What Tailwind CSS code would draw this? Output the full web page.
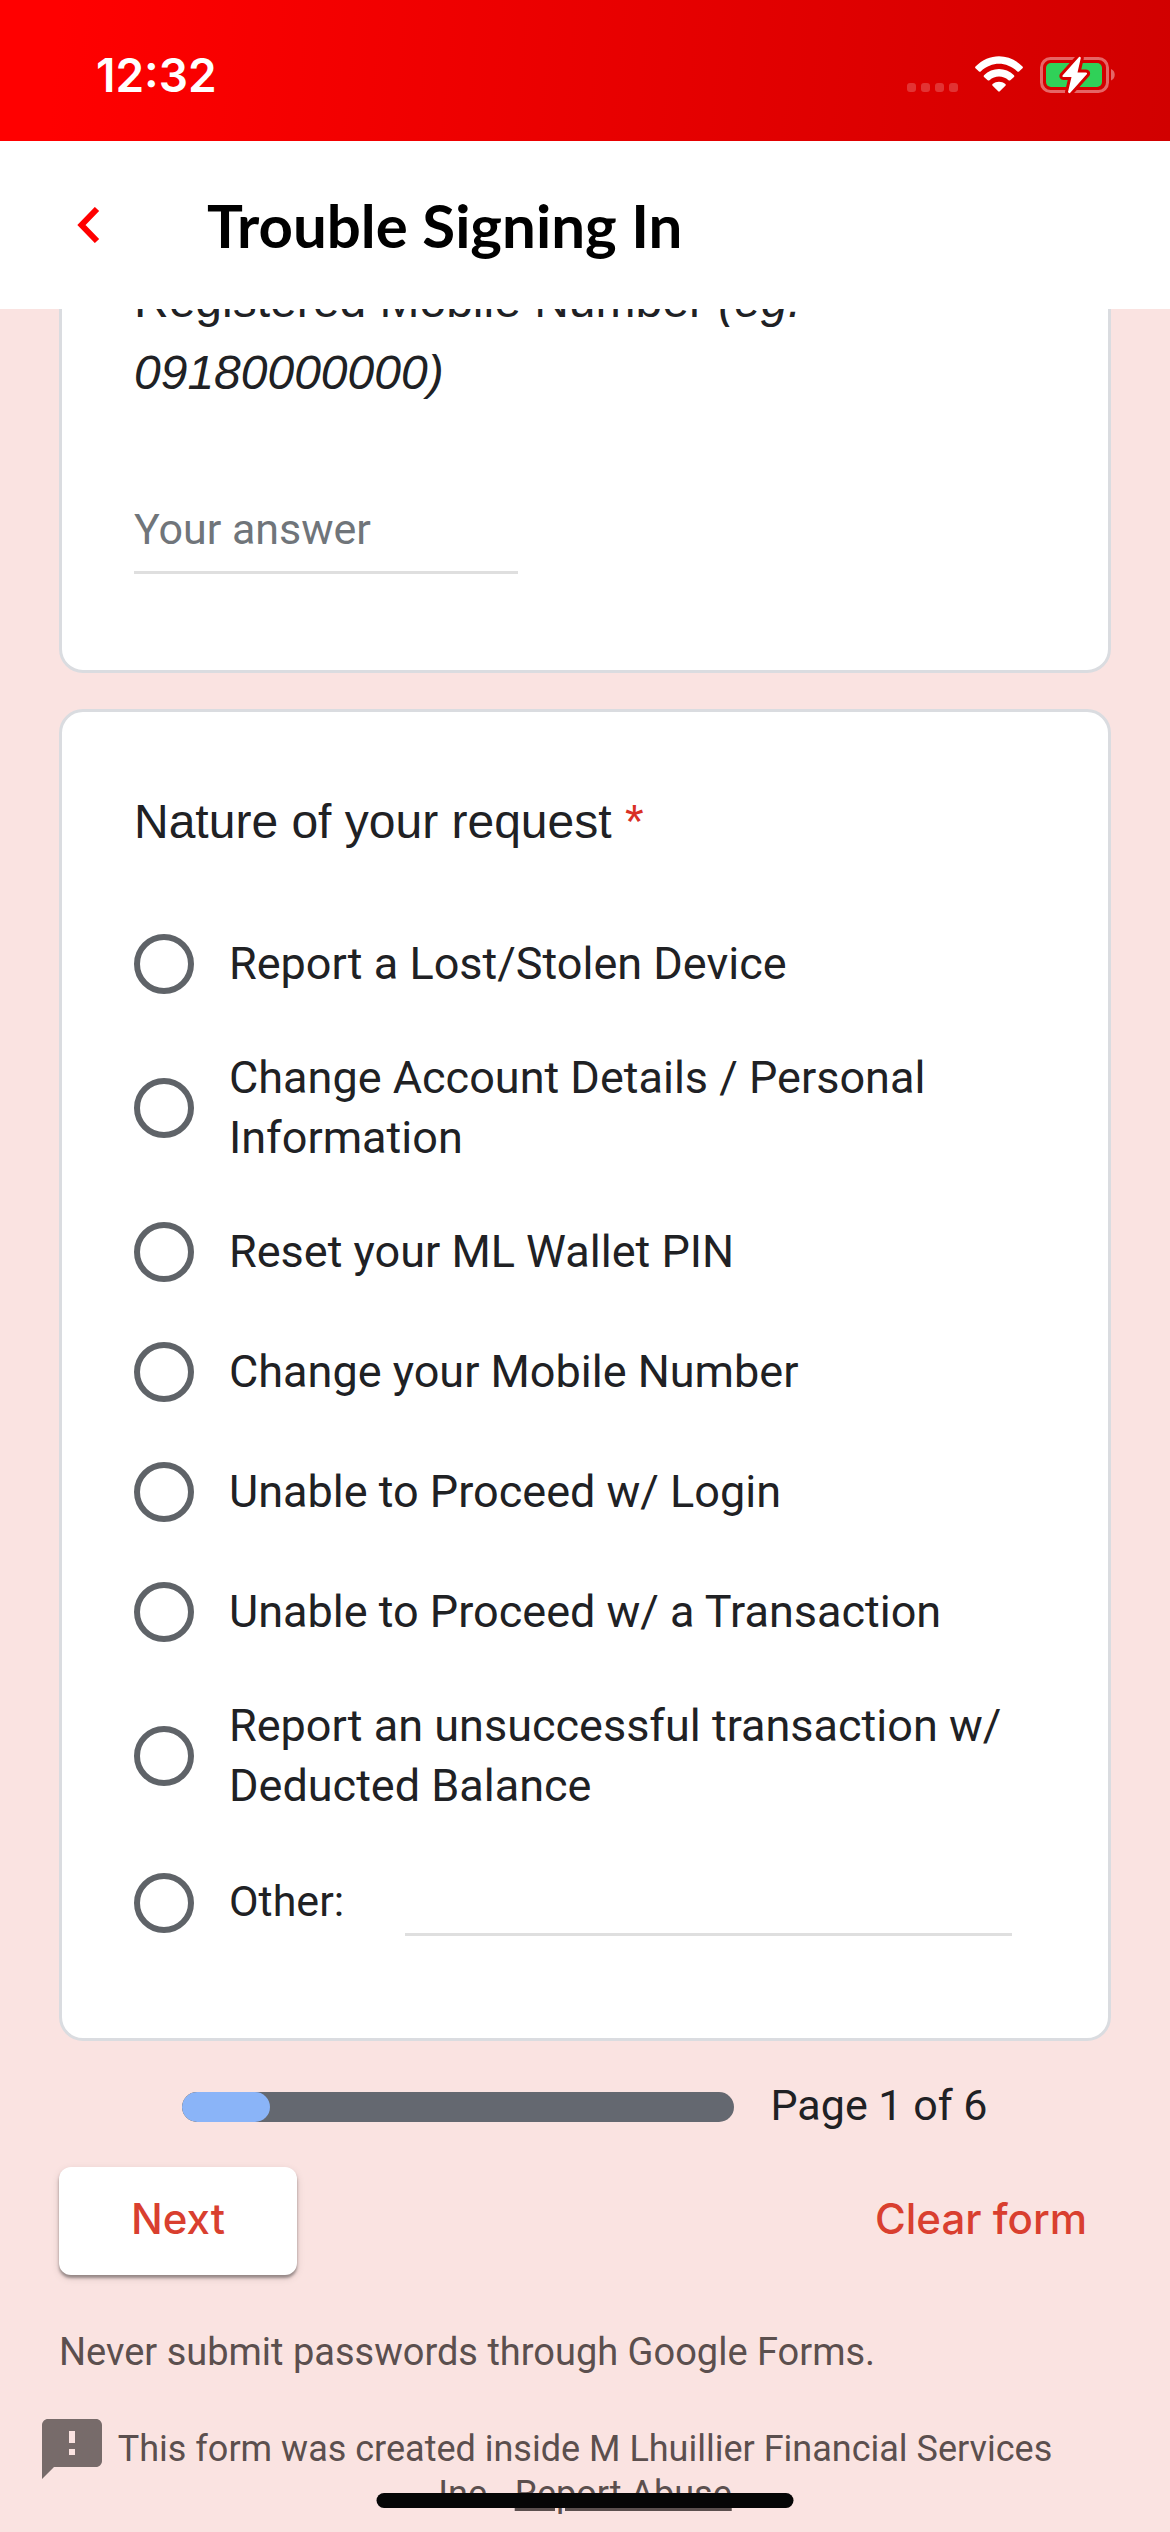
<!DOCTYPE html>
<html lang="en">
<head>
<meta charset="utf-8">
<meta name="viewport" content="width=device-width, initial-scale=1">
<title>Trouble Signing In</title>
<script src="https://cdn.jsdelivr.net/npm/@tailwindcss/browser@4"></script>
</head>
<body class="min-h-screen overflow-x-hidden bg-[#fae3e1] font-['Roboto',sans-serif] text-[#202124]">

<div class="relative z-10">
  <!-- Status bar -->
  <div class="flex h-[141px] items-center justify-between bg-linear-[95deg,#ff0000_5%,#d10000] pt-2 pr-[54px] pl-24 text-white">
    <span class="font-['Inter',sans-serif] text-[46px] leading-none font-semibold">12:32</span>
    <svg class="h-[40px] w-[210px]" viewBox="906 54 210 40" fill="none" role="img" aria-label="No signal, Wi-Fi on, battery charging">
      <g fill="#fff" fill-opacity=".2">
        <rect x="907" y="82" width="9" height="9" rx="3"/>
        <rect x="921" y="82" width="9" height="9" rx="3"/>
        <rect x="935" y="82" width="9" height="9" rx="3"/>
        <rect x="949" y="82" width="9" height="9" rx="3"/>
      </g>
      <g fill="#fff">
        <path d="M975.500 65.500 C989 51.700 1009 51.700 1022.500 65.500 Q1023.300 66.400 1022.500 67.200 L1019 70.400 Q1018.200 71.200 1017.300 70.400 C1006 60.200 992 60.200 980.700 70.400 Q979.800 71.200 979 70.400 L975.500 67.200 Q974.700 66.400 975.500 65.500Z"/>
        <path d="M984 74.300 C992.300 66 1005.700 66 1014 74.300 Q1014.800 75.200 1014 76 L1010.300 79.200 Q1009.400 80 1008.500 79.200 C1003 74.300 995 74.300 989.500 79.200 Q988.600 80 987.700 79.200 L984 76 Q983.200 75.200 984 74.300Z"/>
        <path d="M992.600 83 C996.500 80 1001.500 80 1005.400 83 Q1006.300 83.800 1005.400 84.700 L999.800 90.300 Q999 91 998.200 90.300 L992.600 84.700 Q991.700 83.800 992.600 83Z"/>
      </g>
      <rect x="1041.500" y="57.500" width="66" height="33" rx="9" stroke="#fff" stroke-opacity=".4" stroke-width="3"/>
      <path d="M1111 68 C1116 70 1116 77.500 1111 79.500Z" fill="#fff" fill-opacity=".4"/>
      <rect x="1046" y="62" width="56" height="24" rx="5" fill="#30d158"/>
      <path d="M1079 56 L1062.500 74.500 Q1062 76 1063.500 76 H1071.500 L1068 91 Q1069 93 1070.500 91.500 L1087 73 Q1087.500 71.500 1086 71.500 H1077.500 L1080.800 57 Q1080.300 55 1079 56Z" fill="#fff" stroke="#d60000" stroke-width="6" stroke-linejoin="round" paint-order="stroke"/>
    </svg>
  </div>

  <!-- Title bar -->
  <header class="flex h-[168px] items-center gap-[96px] bg-white px-[66px]">
    <button type="button" aria-label="Back" class="flex h-12 w-[45px] items-center justify-center">
      <svg class="h-9 w-6" viewBox="0 0 24 36" fill="none" stroke="#ff0000" stroke-width="6"><path d="M20 2 4.500 18 20 34"/></svg>
    </button>
    <h1 class="font-['Lato',sans-serif] text-[60px] leading-[72px] font-bold text-black">Trouble Signing In</h1>
  </header>
</div>

<form>
  <main class="-mt-[121px] flex flex-col gap-9 px-[59px]">
    <section class="rounded-3xl border-3 border-[#dadce0] bg-white px-[72px] pt-[74px] pb-24">
      <label for="mobile" class="block font-['Liberation_Sans',sans-serif] text-[48px] leading-[72px]">Registered Mobile Number <i>(eg. 09180000000)</i></label>
      <input id="mobile" type="text" placeholder="Your answer" class="mt-[70px] block h-[95px] w-[384px] border-b-3 border-[#dfdfdf] pt-2 text-[43px] outline-none placeholder:text-[#70757a]">
    </section>

    <section class="rounded-3xl border-3 border-[#dadce0] bg-white px-[72px] pt-[74px] pb-24">
      <fieldset>
        <legend class="font-['Liberation_Sans',sans-serif] text-[48px] leading-[72px]">Nature of your request <span class="text-[#d93025]">*</span></legend>
        <div class="mt-[70px] flex flex-col gap-12 text-[45px] leading-[60px]">
          <label class="flex min-h-[72px] items-center gap-[35px]"><input type="radio" name="nature" class="size-[60px] shrink-0 appearance-none rounded-full border-6 border-[#5f6368]"><span>Report a Lost/Stolen Device</span></label>
          <label class="flex min-h-[72px] items-center gap-[35px]"><input type="radio" name="nature" class="size-[60px] shrink-0 appearance-none rounded-full border-6 border-[#5f6368]"><span>Change Account Details / Personal Information</span></label>
          <label class="flex min-h-[72px] items-center gap-[35px]"><input type="radio" name="nature" class="size-[60px] shrink-0 appearance-none rounded-full border-6 border-[#5f6368]"><span>Reset your ML Wallet PIN</span></label>
          <label class="flex min-h-[72px] items-center gap-[35px]"><input type="radio" name="nature" class="size-[60px] shrink-0 appearance-none rounded-full border-6 border-[#5f6368]"><span>Change your Mobile Number</span></label>
          <label class="flex min-h-[72px] items-center gap-[35px]"><input type="radio" name="nature" class="size-[60px] shrink-0 appearance-none rounded-full border-6 border-[#5f6368]"><span>Unable to Proceed w/ Login</span></label>
          <label class="flex min-h-[72px] items-center gap-[35px]"><input type="radio" name="nature" class="size-[60px] shrink-0 appearance-none rounded-full border-6 border-[#5f6368]"><span>Unable to Proceed w/ a Transaction</span></label>
          <label class="flex min-h-[72px] items-center gap-[35px]"><input type="radio" name="nature" class="size-[60px] shrink-0 appearance-none rounded-full border-6 border-[#5f6368]"><span>Report an unsuccessful transaction w/ Deducted Balance</span></label>
          <div class="flex h-[78px] items-center pr-6">
            <label class="flex w-[271px] shrink-0 items-center gap-[35px] text-[43px]"><input type="radio" name="nature" class="size-[60px] shrink-0 appearance-none rounded-full border-6 border-[#5f6368]"><span class="pb-1">Other:</span></label>
            <input type="text" aria-label="Other response" class="h-[66px] min-w-0 flex-1 border-b-3 border-[#dfdfdf] text-[43px] outline-none">
          </div>
        </div>
      </fieldset>
    </section>
  </main>

  <div class="mt-9 flex h-[60px] items-center justify-center gap-9 text-[43px] leading-[60px]">
    <div role="progressbar" aria-label="Form progress" aria-valuemin="0" aria-valuemax="6" aria-valuenow="1" class="h-[30px] w-[552px] overflow-hidden rounded-full bg-[#646870]">
      <div class="h-full w-[88px] rounded-full bg-[#8ab4f8]"></div>
    </div>
    <span class="pb-1">Page 1 of 6</span>
  </div>

  <div class="mt-[30px] flex items-center justify-between px-[59px] font-['Inter',sans-serif] text-[42px] leading-[60px] font-medium text-[#d93f2f]">
    <button type="button" class="h-[108px] w-[238px] rounded-xl bg-white pb-1 shadow-[0_3px_3px_rgba(0,0,0,0.35),0_3px_9px_rgba(0,0,0,0.12)]">Next</button>
    <button type="reset" class="h-[108px] px-6 pb-1">Clear form</button>
  </div>
</form>

<footer class="pb-4 text-[36px] leading-[45px] text-[#5b4f4e]">
  <p class="mt-[55px] px-[59px] text-[38px] leading-[45px]">Never submit passwords through Google Forms.</p>
  <div class="mt-11 flex items-start px-[42px]">
    <a href="#feedback" aria-label="Send feedback" class="shrink-0">
      <svg class="size-[60px]" viewBox="2 2 20 20" fill="#776b6a"><path d="M20 2H4c-1.100 0-2 .9-2 2v18l4-4h14c1.100 0 2-.9 2-2V4c0-1.100-.9-2-2-2zm-7 12h-2v-2h2v2zm0-4h-2V6h2v4z"/></svg>
    </a>
    <p class="mr-[60px] flex-1 pt-2 text-center">This form was created inside M Lhuillier Financial Services Inc.. <a href="#report" class="underline">Report Abuse</a></p>
  </div>
</footer>

<!-- Home indicator -->
<div class="fixed bottom-6 left-1/2 z-20 h-[15px] w-[417px] -translate-x-1/2 rounded-full bg-[#060606]"></div>

</body>
</html>
